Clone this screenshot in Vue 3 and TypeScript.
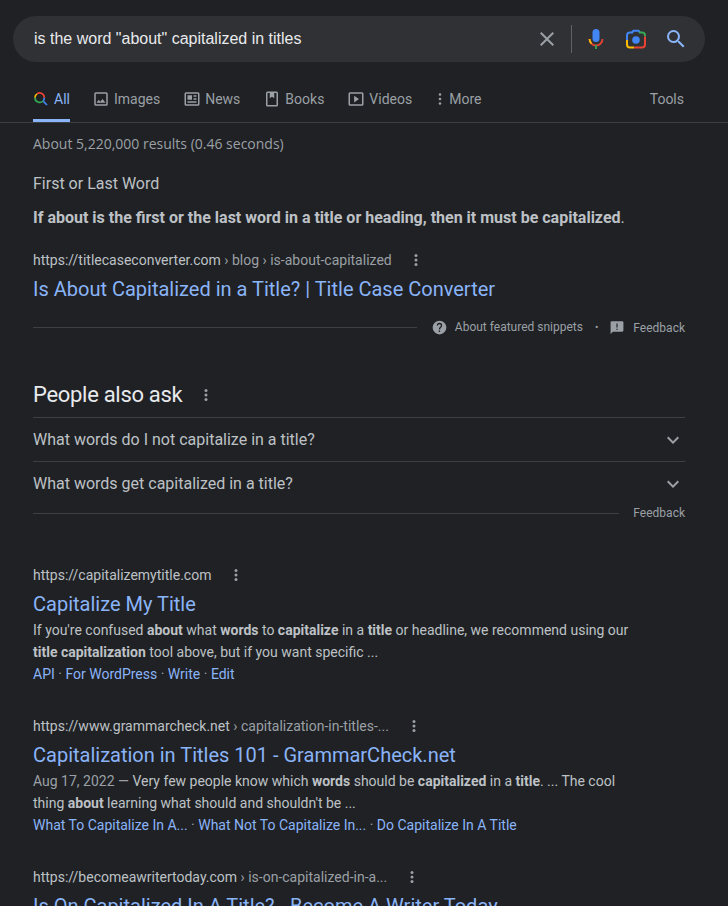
<template>
  <div class="page">
    <div class="search">
      <span class="query">is the word "about" capitalized in titles</span>
      <svg class="x" width="24" height="24" viewBox="0 0 24 24"><path fill="#9aa0a6" d="M19 6.41 17.59 5 12 10.59 6.41 5 5 6.41 10.59 12 5 17.59 6.41 19 12 13.41 17.59 19 19 17.59 13.41 12z"/></svg>
      <span class="vline"></span>
      <svg class="mic" width="24" height="24" viewBox="0 0 24 24">
        <rect x="8.500" y="2" width="7" height="13" rx="3.500" fill="#4285f4"/>
        <path d="M5.5 12a6.500 6.500 0 0 0 13 0" fill="none" stroke="#ea4335" stroke-width="1.800"/>
        <path d="M5.500 12a6.500 6.500 0 0 0 2 4.500" fill="none" stroke="#fbbc04" stroke-width="1.800"/>
        <rect x="11.100" y="18" width="1.800" height="4" fill="#34a853"/>
      </svg>
      <svg class="cam" width="24" height="24" viewBox="0 0 24 24">
        <path d="M8 5.500 9.500 3.800h5L16 5.500" fill="none" stroke="#4285f4" stroke-width="2"/>
        <path d="M3 13V8.500a3 3 0 0 1 3-3h3" fill="none" stroke="#4285f4" stroke-width="2"/>
        <path d="M15 5.500h3a3 3 0 0 1 3 3v1" fill="none" stroke="#34a853" stroke-width="2"/>
        <path d="M21 9.500v8a3 3 0 0 1-3 3h-8" fill="none" stroke="#ea4335" stroke-width="2"/>
        <path d="M10 20.500H6a3 3 0 0 1-3-3V13" fill="none" stroke="#fbbc04" stroke-width="2"/>
        <circle cx="12" cy="13" r="3.800" fill="#4285f4"/>
      </svg>
      <svg class="mag" width="24" height="24" viewBox="0 0 24 24"><path fill="#8ab4f8" d="M15.500 14h-.79l-.28-.27A6.471 6.471 0 0 0 16 9.500 6.500 6.500 0 1 0 9.500 16c1.610 0 3.090-.59 4.230-1.570l.27.28v.79l5 4.990L20.490 19l-4.990-5zm-6 0C7.010 14 5 11.990 5 9.500S7.010 5 9.500 5 14 7.010 14 9.500 11.990 14 9.500 14z"/></svg>
    </div>

    <nav class="tabs">
      <a v-for="t in tabs" :key="t.name" class="tab" :class="{ active: t.name === 'All' }">
        <svg v-if="t.name === 'All'" class="lens" width="16" height="16" viewBox="0 0 24 24">
          <path d="M15.500 15.500 21 21" stroke="#4285f4" stroke-width="2.600" fill="none"/>
          <path d="M3 10a7 7 0 0 1 3-5.700" stroke="#fbbc04" stroke-width="2.600" fill="none"/>
          <path d="M6 4.300A7 7 0 0 1 17 10" stroke="#ea4335" stroke-width="2.600" fill="none"/>
          <path d="M17 10a7 7 0 0 1-2 5" stroke="#4285f4" stroke-width="2.600" fill="none"/>
          <path d="M15 15a7 7 0 0 1-12-5" stroke="#34a853" stroke-width="2.600" fill="none"/>
        </svg>
        <svg v-else-if="t.name !== 'More'" width="18" height="18" viewBox="0 0 24 24" fill="#9aa0a6"><path :d="t.icon"/></svg>
        <svg v-else width="10" height="16" viewBox="0 0 10 16" fill="#9aa0a6"><circle cx="5" cy="3.500" r="1.300"/><circle cx="5" cy="8" r="1.300"/><circle cx="5" cy="12.500" r="1.300"/></svg>
        <span>{{ t.name }}</span>
      </a>
      <span class="tools">Tools</span>
    </nav>

    <main class="main">
      <div class="stats">About 5,220,000 results (0.46 seconds)</div>

      <section class="snippet">
        <div class="snip-head">First or Last Word</div>
        <div class="snip-body"><b>If about is the first or the last word in a title or heading, then it must be capitalized</b>.</div>
        <div class="cite first">
          <span class="host">https://titlecaseconverter.com</span><span class="crumb"> › blog › is-about-capitalized</span>
          <svg class="more" width="4" height="14" viewBox="0 0 4 14" fill="#9aa0a6"><circle cx="2" cy="2.500" r="1.500"/><circle cx="2" cy="7" r="1.500"/><circle cx="2" cy="11.500" r="1.500"/></svg>
        </div>
        <a class="title">Is About Capitalized in a Title? | Title Case Converter</a>
        <div class="snip-foot">
          <span class="rule"></span>
          <svg class="help" width="15" height="15" viewBox="0 0 24 24"><path fill="#9aa0a6" d="M12 1a11 11 0 1 0 0 22 11 11 0 0 0 0-22zm1 18h-2.200v-2.200H13V19zm2.400-7.700-1 1c-.8.8-1.300 1.500-1.300 3h-2.200v-.5c0-1.200.5-2.300 1.300-3.100l1.300-1.400c.4-.3.600-.9.600-1.400a2.100 2.100 0 1 0-4.300 0H7.700a4.300 4.300 0 1 1 8.600 0c0 1-.4 1.800-.9 2.400z"/></svg>
          <span class="about">About featured snippets</span>
          <span class="bullet">•</span>
          <svg class="fb" width="14" height="14" viewBox="0 0 24 24"><path fill="#9aa0a6" d="M21 2H3a2 2 0 0 0-2 2v20l4-4h16a2 2 0 0 0 2-2V4a2 2 0 0 0-2-2zm-8 11h-2V6h2v7zm0 4h-2v-2h2v2z"/></svg>
          <span class="feedback">Feedback</span>
        </div>
      </section>

      <section class="paa">
        <h2><span>People also ask</span>
          <svg width="4" height="14" viewBox="0 0 4 14" fill="#9aa0a6"><circle cx="2" cy="2.500" r="1.500"/><circle cx="2" cy="7" r="1.500"/><circle cx="2" cy="11.500" r="1.500"/></svg>
        </h2>
        <div v-for="q in questions" :key="q" class="q">
          <span>{{ q }}</span>
          <svg width="24" height="24" viewBox="0 0 24 24"><path fill="#9aa0a6" d="M16.590 8.590 12 13.170 7.410 8.590 6 10l6 6 6-6z"/></svg>
        </div>
        <div class="paa-foot"><span class="rule"></span><span class="feedback">Feedback</span></div>
      </section>

      <article v-for="r in results" :key="r.host" class="result">
        <div class="cite">
          <span class="host">{{ r.host }}</span><span class="crumb">{{ r.crumb }}</span>
          <svg class="more" width="4" height="14" viewBox="0 0 4 14" fill="#9aa0a6"><circle cx="2" cy="2.500" r="1.500"/><circle cx="2" cy="7" r="1.500"/><circle cx="2" cy="11.500" r="1.500"/></svg>
        </div>
        <a class="title">{{ r.title }}</a>
        <div v-if="r.body" class="desc">
          <span v-if="r.date" class="date">{{ r.date }} — </span>
          <template v-for="(p, i) in r.body" :key="i"><b v-if="i % 2">{{ p }}</b><template v-else>{{ p }}</template></template>
        </div>
        <div v-if="r.links" class="links">
          <template v-for="(l, i) in r.links" :key="l"><span v-if="i" class="sep"> · </span><a>{{ l }}</a></template>
        </div>
      </article>
    </main>
  </div>
</template>

<script setup lang="ts">
const tabs = [
  { name: 'All', icon: '' },
  { name: 'Images', icon: 'M19 3H5a2 2 0 0 0-2 2v14a2 2 0 0 0 2 2h14a2 2 0 0 0 2-2V5a2 2 0 0 0-2-2zm0 16H5V5h14v14zm-5-7-3 3.700L9 13l-3 4h12l-4-5z' },
  { name: 'News', icon: 'M20 3H4a2 2 0 0 0-2 2v14a2 2 0 0 0 2 2h16a2 2 0 0 0 2-2V5a2 2 0 0 0-2-2zm0 16H4V5h16v14zM6 7h6v6H6V7zm8 0h4v2h-4V7zm0 4h4v2h-4v-2zM6 15h12v2H6v-2z' },
  { name: 'Books', icon: 'M18 2H6a2 2 0 0 0-2 2v16a2 2 0 0 0 2 2h12a2 2 0 0 0 2-2V4a2 2 0 0 0-2-2zm0 18H6V4h3v7l3-2 3 2V4h3v16z' },
  { name: 'Videos', icon: 'M20 3H4a2 2 0 0 0-2 2v14a2 2 0 0 0 2 2h16a2 2 0 0 0 2-2V5a2 2 0 0 0-2-2zm0 16H4V5h16v14zM9.500 7.500v9L16 12z' },
  { name: 'More', icon: '' },
]

const questions = [
  'What words do I not capitalize in a title?',
  'What words get capitalized in a title?',
]

// body alternates plain text and bold text
const results = [
  {
    host: 'https://capitalizemytitle.com',
    crumb: '',
    title: 'Capitalize My Title',
    date: '',
    body: ["If you're confused ", 'about', ' what ', 'words', ' to ', 'capitalize', ' in a ', 'title', ' or headline, we recommend using our ', 'title capitalization', ' tool above, but if you want specific ...'],
    links: ['API', 'For WordPress', 'Write', 'Edit'],
  },
  {
    host: 'https://www.grammarcheck.net',
    crumb: ' › capitalization-in-titles-...',
    title: 'Capitalization in Titles 101 - GrammarCheck.net',
    date: 'Aug 17, 2022',
    body: ['Very few people know which ', 'words', ' should be ', 'capitalized', ' in a ', 'title', '. ... The cool thing ', 'about', " learning what should and shouldn't be ..."],
    links: ['What To Capitalize In A...', 'What Not To Capitalize In...', 'Do Capitalize In A Title'],
  },
  {
    host: 'https://becomeawritertoday.com',
    crumb: ' › is-on-capitalized-in-a...',
    title: 'Is On Capitalized In A Title? - Become A Writer Today',
    date: '',
    body: null,
    links: null,
  },
]
</script>

<style>
html, body { margin: 0; background: #202124; overflow: hidden; }
</style>

<style scoped>
.page {
  height: 906px;
  overflow: hidden;
  background: #202124;
  font-family: Roboto, "Liberation Sans", Arial, sans-serif;
  color: #bdc1c6;
  padding-top: 16px;
  box-sizing: border-box;
}

.search {
  display: flex;
  align-items: center;
  height: 46px;
  margin: 0 23px 0 13px;
  padding: 0 17px 0 21px;
  background: #303134;
  border-radius: 23px;
}
.query { flex: 1; font-family: "Liberation Sans", Arial, sans-serif; font-size: 16px; color: #e8eaed; }
.x { margin-right: 12px; }
.vline { width: 1px; height: 28px; background: #5f6368; margin-right: 12px; }
.mic { margin-right: 16px; }
.cam { margin-right: 16px; }

.tabs {
  display: flex;
  align-items: center;
  height: 60px;
  padding: 0 44px 0 33px;
  border-bottom: 1px solid #3c4043;
  font-size: 14px;
  color: #9aa0a6;
}
.tab {
  display: flex;
  align-items: center;
  gap: 4px;
  height: 100%;
  margin-right: 23px;
  box-sizing: border-box;
  padding-top: 16px;
  border-bottom: 3px solid transparent;
}
.lens { margin-right: 1px; }
.tab.active { color: #8ab4f8; border-bottom-color: #8ab4f8; margin-right: 22px; }
.tools { margin-left: auto; padding-top: 13px; }

.main { padding: 0 43px 0 33px; }
.stats { font-family: "Open Sans", Roboto, sans-serif; font-size: 14px; line-height: 42px; color: #9aa0a6; height: 43px; }

.snip-head { font-size: 16px; line-height: 22px; margin-top: 7px; color: #bdc1c6; }
.snip-body { font-size: 16px; line-height: 24px; margin-top: 11px; white-space: nowrap; }
.snip-body b { color: #bdc1c6; }

.cite {
  display: flex;
  align-items: center;
  font-size: 14px;
  line-height: 20px;
  white-space: pre;
}
.cite.first { margin-top: 20px; }
.host { color: #bdc1c6; }
.crumb { color: #9aa0a6; }
.more { margin-left: 23px; }
.first .more { margin-left: 22px; }

.title {
  display: block;
  font-size: 20px;
  line-height: 26px;
  color: #8ab4f8;
  margin-top: 6px;
  white-space: nowrap;
}

.snip-foot { display: flex; align-items: center; margin-top: 13px; height: 24px; font-size: 12px; color: #9aa0a6; }
.rule { flex: 1; height: 1px; background: #3c4043; }
.help { margin: 0 0 0 15px; }
.about { margin-left: 8px; }
.bullet { margin: 0 12px; font-size: 10px; }
.fb { margin-right: 9px; }
.feedback { font-size: 12px; color: #9aa0a6; }
.snip-foot .feedback { padding-top: 2px; }

.paa { margin-top: 34px; }
.paa h2 {
  display: flex;
  align-items: center;
  gap: 22px;
  margin: 0;
  font-size: 22px;
  line-height: 44px;
  letter-spacing: -.3px;
  font-weight: 400;
  color: #e8eaed;
}
.q {
  display: flex;
  align-items: center;
  justify-content: space-between;
  height: 43px;
  border-top: 1px solid #3c4043;
  font-size: 16px;
  color: #bdc1c6;
}
.paa-foot { display: flex; align-items: center; height: 16px; }
.paa-foot .feedback { margin-left: 14px; }

.result { margin-top: 31px; }
.paa + .result { margin-top: 44px; }
.desc { font-size: 14px; line-height: 22px; margin-top: 2px; width: 610px; color: #bdc1c6; }
.desc b { color: #bdc1c6; }
.date { color: #9aa0a6; }
.links { font-size: 14px; line-height: 22px; color: #9aa0a6; white-space: pre; }
.links a { color: #8ab4f8; }
</style>
